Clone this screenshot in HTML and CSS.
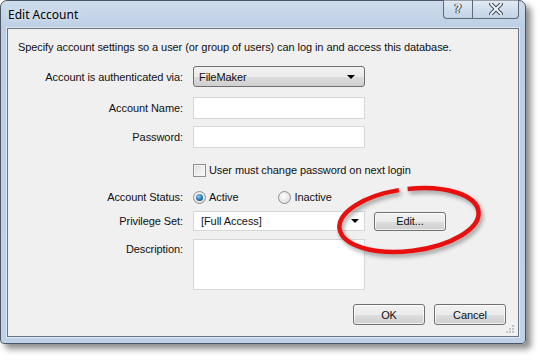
FILE: index.html
```html
<!DOCTYPE html>
<html>
<head>
<meta charset="utf-8">
<link rel="stylesheet" href="styles.css">
</head>
<body>
<div class="window">
  <div class="titlebar">
    <span class="title">Edit Account</span>
    <div class="caption-btns">
      <div class="cbtn help">?</div>
      <div class="cbtn close">
        <svg width="14" height="12" viewBox="0 0 14 12"><path d="M2 1 L12 11 M12 1 L2 11" stroke="#3b4452" stroke-width="4" stroke-linecap="square"/><path d="M2 1 L12 11 M12 1 L2 11" stroke="#f4f6f9" stroke-width="2" stroke-linecap="square"/></svg>
      </div>
    </div>
  </div>
  <div class="client">
    <p class="intro">Specify account settings so a user (or group of users) can log in and access this database.</p>
    <div class="row r-auth">
      <span class="label">Account is authenticated via:</span>
      <div class="combo"><span>FileMaker</span><span class="arrow"></span></div>
    </div>
    <div class="row r-name">
      <span class="label">Account Name:</span>
      <div class="field tall"></div>
    </div>
    <div class="row r-pass">
      <span class="label">Password:</span>
      <div class="field tall"></div>
    </div>
    <div class="row r-check">
      <span class="label"></span>
      <span class="checkbox"></span><span class="optlabel">User must change password on next login</span>
    </div>
    <div class="row r-status">
      <span class="label">Account Status:</span>
      <span class="radio checked"></span><span class="optlabel">Active</span>
      <span class="radio inactive"></span><span class="optlabel">Inactive</span>
    </div>
    <div class="row r-priv">
      <span class="label">Privilege Set:</span>
      <div class="field priv"><span>[Full Access]</span><span class="arrow"></span></div>
      <div class="btn edit">Edit...</div>
    </div>
    <div class="row r-desc">
      <span class="label desc-label">Description:</span>
      <div class="field desc"></div>
    </div>
    <div class="footer">
      <div class="btn">OK</div>
      <div class="btn">Cancel</div>
    </div>
    <svg class="grip" width="9" height="9" viewBox="0 0 9 9">
      <rect x="6" y="0" width="2" height="2" fill="#c0c4c9"/>
      <rect x="3" y="3" width="2" height="2" fill="#c0c4c9"/><rect x="6" y="3" width="2" height="2" fill="#c0c4c9"/>
      <rect x="0" y="6" width="2" height="2" fill="#c0c4c9"/><rect x="3" y="6" width="2" height="2" fill="#c0c4c9"/><rect x="6" y="6" width="2" height="2" fill="#c0c4c9"/>
    </svg>
  </div>
  <svg class="annotation" width="541" height="360" viewBox="0 0 541 360">
    <ellipse cx="409" cy="220" rx="70" ry="31" transform="rotate(-7 409 220)" fill="none" stroke="#e8100f" stroke-width="4.5" stroke-dasharray="240 9 400"/>
  </svg>
</div>
</body>
</html>
```
FILE: styles.css
```css
html, body {
  margin: 0;
  padding: 0;
  background: #ffffff;
}
body {
  width: 541px;
  height: 360px;
  overflow: hidden;
  font-family: "Liberation Sans", Arial, sans-serif;
  font-size: 11px;
  letter-spacing: -0.08px;
  color: #111;
}
.window {
  position: relative;
  box-sizing: border-box;
  width: 526px;
  height: 344px;
  border: 1px solid #4c5563;
  border-radius: 7px 7px 4px 4px;
  background: linear-gradient(180deg, #cddcec 0px, #bccfe5 27px, #c0d2e7 100%);
  box-shadow: 5px 5px 6px rgba(0,0,0,0.45);
  display: flex;
  flex-direction: column;
}
.titlebar {
  height: 27px;
  display: flex;
  justify-content: space-between;
  align-items: flex-start;
}
.title {
  font-family: "Noto Sans", "Liberation Sans", sans-serif;
  font-size: 12px;
  letter-spacing: 0;
  padding: 5px 0 0 7px;
  color: #000;
  text-shadow: 0 0 6px rgba(255,255,255,0.9);
}
.caption-btns {
  display: flex;
  margin-top: -1px;
  margin-right: 6px;
}
.cbtn {
  box-sizing: border-box;
  height: 19px;
  border: 1px solid #5e6a79;
  border-top: none;
  background: linear-gradient(180deg, rgba(255,255,255,0.45), rgba(255,255,255,0.15) 50%, rgba(200,215,232,0.3));
  display: flex;
  align-items: center;
  justify-content: center;
}
.help {
  width: 29px;
  border-radius: 0 0 0 4px;
  border-right: none;
  font-family: "DejaVu Sans", sans-serif;
  font-weight: bold;
  font-size: 12px;
  color: #eef2f6;
  text-shadow: 0 0 1px #333, 0 0 1px #333, 1px 0 0 #3b4452, -1px 0 0 #3b4452;
}
.close {
  width: 47px;
  border-radius: 0 0 4px 0;
}
.client {
  position: relative;
  flex: 1;
  margin: 0 6px 6px 6px;
  border: 1px solid #6a7583;
  box-shadow: 0 0 0 1px rgba(255,255,255,0.5);
  background: #f0f0f0;
  display: flex;
  flex-direction: column;
}
.intro {
  margin: 11px 0 0 10px;
  line-height: 14px;
  white-space: nowrap;
}
.row {
  display: flex;
  align-items: center;
}
.label {
  width: 175px;
  margin-right: 10px;
  text-align: right;
  flex-shrink: 0;
  line-height: 14px;
}
.r-auth { margin-top: 12px; }
.r-name { margin-top: 10px; }
.r-pass { margin-top: 7px; }
.r-check { margin-top: 15px; }
.r-status { margin-top: 13px; }
.r-priv { margin-top: 7px; }
.r-desc { margin-top: 8px; align-items: flex-start; }
.desc-label { margin-top: 3px; }
.combo {
  box-sizing: border-box;
  width: 172px;
  height: 21px;
  border: 1px solid #707070;
  border-radius: 3px;
  background: linear-gradient(180deg, #f2f2f2 0%, #ebebeb 50%, #dddddd 51%, #cfcfcf 100%);
  display: flex;
  align-items: center;
  justify-content: space-between;
  padding: 0 9px 0 5px;
}
.arrow {
  width: 0;
  height: 0;
  border-left: 4px solid transparent;
  border-right: 4px solid transparent;
  border-top: 4px solid #000;
}
.field {
  box-sizing: border-box;
  width: 172px;
  background: #fff;
  border: 1px solid #d5d7da;
}
.tall { height: 22px; }
.priv {
  height: 20px;
  display: flex;
  align-items: center;
  justify-content: space-between;
  padding: 0 5px 0 7px;
}
.desc { height: 51px; }
.checkbox {
  box-sizing: border-box;
  width: 13px;
  height: 13px;
  border: 1px solid #8e8f8f;
  background: linear-gradient(135deg, #dcdcdc, #fbfbfb);
  box-shadow: inset 0 0 0 1px #f4f4f4;
  margin-right: 3px;
}
.optlabel { line-height: 14px; }
.radio {
  box-sizing: border-box;
  width: 13px;
  height: 13px;
  border-radius: 50%;
  border: 1px solid #8e8f8f;
  background: radial-gradient(circle at 40% 40%, #fefefe, #d6d6d6);
  margin-right: 3px;
  position: relative;
}
.radio.checked::after {
  content: "";
  position: absolute;
  left: 2px;
  top: 2px;
  width: 7px;
  height: 7px;
  border-radius: 50%;
  background: radial-gradient(circle at 40% 35%, #8fd0f5, #1c6fa8 60%, #0c3f70);
}
.radio.inactive { margin-left: 40px; }
.btn {
  box-sizing: border-box;
  width: 72px;
  height: 21px;
  border: 1px solid #707070;
  border-radius: 3px;
  background: linear-gradient(180deg, #f2f2f2 0%, #ebebeb 50%, #dddddd 51%, #cfcfcf 100%);
  box-shadow: inset 0 0 0 1px rgba(255,255,255,0.7);
  display: flex;
  align-items: center;
  justify-content: center;
}
.edit {
  height: 19px;
  margin-left: 9px;
}
.footer {
  display: flex;
  justify-content: flex-end;
  gap: 9px;
  margin: 14px 12px 0 0;
}
.grip {
  position: absolute;
  right: 3px;
  bottom: 2px;
}
.annotation {
  position: absolute;
  left: -1px;
  top: -1px;
  filter: drop-shadow(2px 3px 2px rgba(0,0,0,0.35));
  pointer-events: none;
}
```
